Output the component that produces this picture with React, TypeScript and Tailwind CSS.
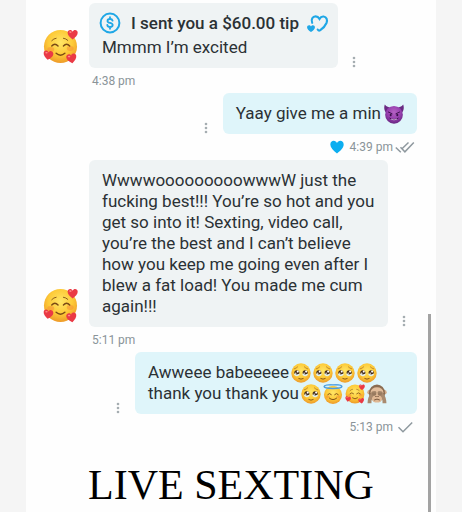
import type { ReactNode } from 'react'

interface IIcon {
  className?: string
}

interface IMessage {
  children: ReactNode
  time: string
}

interface IOutgoingMessage extends IMessage {
  isLiked?: boolean
  isRead?: boolean
}

const HEART =
  'M0 5C-3 2.8-5.2.6-5.2-1.9-5.2-3.8-3.9-4.8-2.6-4.8-1.4-4.8-.5-4.1 0-3 .5-4.1 1.4-4.8 2.6-4.8 3.9-4.8 5.2-3.8 5.2-1.9 5.2.6 3 2.8 0 5Z'

const EmojiDefs = () => (
  <svg width="0" height="0" className="absolute" aria-hidden="true">
    <defs>
      <radialGradient id="face" cx="50%" cy="38%" r="62%">
        <stop offset="0" stopColor="#ffe566" />
        <stop offset="0.6" stopColor="#fdca38" />
        <stop offset="1" stopColor="#ee9a28" />
      </radialGradient>
      <radialGradient id="devil" cx="50%" cy="35%" r="65%">
        <stop offset="0" stopColor="#b562c4" />
        <stop offset="0.6" stopColor="#943ead" />
        <stop offset="1" stopColor="#672680" />
      </radialGradient>
    </defs>
  </svg>
)

const LoveFace = ({ className }: IIcon) => (
  <svg viewBox="0 0 36 36" className={className} role="img" aria-label="Smiling face with hearts">
    <circle cx="18" cy="18" r="17" fill="url(#face)" />
    <ellipse cx="8" cy="21" rx="3.5" ry="2.5" fill="#f58a36" opacity="0.5" />
    <ellipse cx="28" cy="20" rx="3.5" ry="2.5" fill="#f58a36" opacity="0.5" />
    <g fill="none" stroke="#7a4a15" strokeLinecap="round">
      <path d="M9 17.5q3.2-3.6 6.5 0M21 17.5q3.2-3.6 6.5 0" strokeWidth="1.4" />
      <path d="M9 12q2-2.3 4.5-2.5M21 9.5q2.500.2 4.500 2.200" strokeWidth="0.9" />
      <path d="M13.500 25q4.500 3.800 9 0" strokeWidth="1.500" />
    </g>
    <g fill="#ea3a45">
      <path d={HEART} transform="translate(30.5 5.8)" />
      <path d={HEART} transform="translate(5.4 27) rotate(8) scale(0.96)" />
      <path d={HEART} transform="translate(29.4 30.4) rotate(-10)" />
    </g>
    <g fill="#ff8b87">
      <ellipse cx="28.2" cy="3.2" rx="1.3" ry="0.8" />
      <ellipse cx="3.6" cy="24.4" rx="1.3" ry="0.8" />
      <ellipse cx="26.8" cy="28.4" rx="1.3" ry="0.8" />
    </g>
  </svg>
)

const TearyFace = ({ className }: IIcon) => (
  <svg viewBox="0 0 36 36" className={className} role="img" aria-label="Face holding back tears">
    <circle cx="18" cy="18" r="17.5" fill="url(#face)" />
    <path d="M6 10.5q3.500-.8 6-3.500M30 10.500q-3.500-.8-6-3.500" fill="none" stroke="#a5691d" strokeWidth="1.2" strokeLinecap="round" />
    <circle cx="10.5" cy="17.5" r="4.6" fill="#40291a" />
    <circle cx="25.5" cy="17.5" r="4.6" fill="#40291a" />
    <path d="M5.200 19q5.300 3 10.600 0-.6 5-5.300 5t-5.300-5ZM20.200 19q5.300 3 10.600 0-.6 5-5.300 5t-5.300-5Z" fill="#e3f1ee" />
    <g fill="#fff">
      <circle cx="12.2" cy="15.500" r="1.900" />
      <circle cx="27.2" cy="15.500" r="1.900" />
      <circle cx="8.600" cy="18.500" r="1.200" />
      <circle cx="23.600" cy="18.500" r="1.200" />
    </g>
    <path d="M14 28q4 2.500 8 0" fill="none" stroke="#7a4a15" strokeWidth="1.600" strokeLinecap="round" />
  </svg>
)

const HaloFace = ({ className }: IIcon) => (
  <svg viewBox="0 0 36 36" className={className} role="img" aria-label="Smiling face with halo">
    <circle cx="18" cy="19.5" r="16.3" fill="url(#face)" />
    <ellipse cx="18" cy="4.6" rx="16" ry="3.4" fill="none" stroke="#4c9ddf" strokeWidth="2.6" />
    <path d="M5 3.4q13-4 26 0" fill="none" stroke="#9bd0f5" strokeWidth="1" />
    <ellipse cx="8.5" cy="23" rx="3.5" ry="2.4" fill="#f58a36" opacity="0.5" />
    <ellipse cx="27.5" cy="23" rx="3.5" ry="2.4" fill="#f58a36" opacity="0.5" />
    <g fill="none" stroke="#7a4a15" strokeWidth="1.7" strokeLinecap="round">
      <path d="M8.5 19q3.2-4 6.5 0M21 19q3.2-4 6.5 0" />
      <path d="M11.5 25.5q6.5 5.5 13 0" />
    </g>
  </svg>
)

const MonkeyFace = ({ className }: IIcon) => (
  <svg viewBox="0 0 36 36" className={className} role="img" aria-label="See-no-evil monkey">
    <circle cx="4.500" cy="15" r="4" fill="#d3ab88" />
    <circle cx="31.500" cy="15" r="4" fill="#d3ab88" />
    <ellipse cx="18" cy="16.500" rx="14.500" ry="15.500" fill="#8b6c51" />
    <ellipse cx="18" cy="15" rx="11.500" ry="9" fill="#e2bd9b" />
    <ellipse cx="18" cy="26" rx="9.500" ry="7.500" fill="#dfb894" />
    <path d="M15.600 22.500h1M19.400 22.500h1" stroke="#5b3d28" strokeWidth="1.400" strokeLinecap="round" />
    <path d="M13.500 28.500q4.500-3 9 0" fill="none" stroke="#6b4a32" strokeWidth="1.600" strokeLinecap="round" />
    <path d="M1 34.500C1 28 3 21 7 17c1-4 4-5 9-4q2 1.500.6 3.500 1 2-.6 3.300-1.500 2-5 2.200C8.500 25 8 29 8 34.500Z" fill="#a98a6e" />
    <path d="M35 34.500C35 28 33 21 29 17c-1-4-4-5-9-4q-2 1.500-.6 3.500-1 2 .6 3.300 1.500 2 5 2.200C27.500 25 28 29 28 34.500Z" fill="#a98a6e" />
    <path d="M9 16.500h7.500M9.500 19.500l6.500-.3M27 16.500h-7.500M26.500 19.500l-6.500-.3" stroke="#755840" strokeWidth="0.800" />
  </svg>
)

const DevilFace = ({ className }: IIcon) => (
  <svg viewBox="0 0 36 36" className={className} role="img" aria-label="Smiling face with horns">
    <path d="M5 17C0 12-.5 6 1.5 1 4 5 9 6 13 7ZM31 17c5-5 5.500-11 3.500-16C32 5 27 6 23 7Z" fill="#692982" />
    <circle cx="18" cy="19.5" r="16" fill="url(#devil)" />
    <g fill="none" stroke="#3b114c" strokeLinecap="round">
      <path d="M8 14.5l6.500 3M28 14.5l-6.500 3" strokeWidth="1.700" />
      <path d="M10.500 25.500q7.500 6 15 0" strokeWidth="1.700" />
    </g>
    <ellipse cx="12" cy="19.8" rx="1.8" ry="2.3" fill="#3b114c" />
    <ellipse cx="24" cy="19.8" rx="1.8" ry="2.3" fill="#3b114c" />
    <path d="M12.500 27.200q5.500 2.800 11 0" fill="none" stroke="#eadbf0" strokeWidth="1.200" />
  </svg>
)

const TipIcon = ({ className }: IIcon) => (
  <svg viewBox="0 0 22 22" fill="none" stroke="#1fa7e6" className={className} aria-hidden="true">
    <circle cx="11" cy="11" r="9.4" strokeWidth="2" />
    <path
      d="M13.600 8.700C13.300 7.500 12.400 7 11 7 9.500 7 8.500 7.700 8.500 8.900c0 2.800 5.200 1.300 5.200 4.200C13.700 14.300 12.600 15 11 15c-1.500 0-2.500-.7-2.700-2M11 5.200V7M11 15v1.800"
      strokeWidth="1.8"
      strokeLinecap="round"
    />
  </svg>
)

const HeartsIcon = ({ className }: IIcon) => (
  <svg viewBox="0 0 24 20" className={className} aria-hidden="true">
    <path
      d="M7.200 9.800C5.800 6.500 7.600 3.400 10.600 3.400c1.800 0 3 .9 3.900 2.500.9-1.700 2.400-2.600 4.100-2.400 3 .4 4.100 3.400 2.900 6.500-1.200 2.900-3.800 5.600-6.500 7.400-1 .5-1.700.1-2.300-.9"
      fill="none"
      stroke="#1fa7e6"
      strokeWidth="2.1"
      strokeLinecap="round"
    />
    <path d={HEART} fill="#1fa7e6" transform="translate(6 15.600) scale(0.76 0.7)" />
  </svg>
)

const CheckIcon = ({ isRead }: { isRead?: boolean }) => (
  <svg
    viewBox="0 0 20 14"
    fill="none"
    stroke="#8f999f"
    strokeWidth="1.5"
    className="h-3.5 w-5"
    role="img"
    aria-label={isRead ? 'Read' : 'Sent'}
  >
    {isRead ? (
      <path d="M.8 7.500l5 4.800M7.500 8.300L13.500 2.500M5.500 7.200l4.400 4.600L18.800 2.500" />
    ) : (
      <path d="M3.500 7.300l4.500 4.400L17.200 2.500" />
    )}
  </svg>
)

const MoreButton = () => (
  <button type="button" aria-label="Message options" className="flex w-3 shrink-0 justify-center self-end">
    <svg viewBox="0 0 4 12" fill="#a5adb1" className="h-3 w-1">
      <circle cx="2" cy="2" r="1.3" />
      <circle cx="2" cy="6" r="1.3" />
      <circle cx="2" cy="10" r="1.3" />
    </svg>
  </button>
)

const IncomingMessage = ({ children, time }: IMessage) => (
  <article>
    <div className="flex items-end">
      <div className="w-[63px] shrink-0 pb-1 pl-[17px]">
        <LoveFace className="size-[35px]" />
      </div>
      <div className="mr-2.5 max-w-[299px] rounded-md bg-[#eff3f4] px-[13px] py-2.5">{children}</div>
      <MoreButton />
    </div>
    <div className="flex h-[25px] items-center pl-[66px] text-xs text-[#8a9499]">
      <time>{time}</time>
    </div>
  </article>
)

const OutgoingMessage = ({ children, time, isLiked, isRead }: IOutgoingMessage) => (
  <article className="pr-[19px]">
    <div className="flex justify-end">
      <MoreButton />
      <div className="ml-[11px] max-w-[282px] rounded-md bg-[#dff5fa] px-[13px] py-2.5">{children}</div>
    </div>
    <div className="flex h-[26px] items-center justify-end pr-[2px] text-xs text-[#8a9499]">
      {isLiked ? (
        <svg viewBox="-6 -6 12 12" className="mr-1.5 size-3.5" role="img" aria-label="Liked">
          <path d={HEART} fill="#0caef0" transform="scale(1.1 1.1)" />
        </svg>
      ) : null}
      <time className="mr-0.5">{time}</time>
      <CheckIcon isRead={isRead} />
    </div>
  </article>
)

export default function App() {
  return (
    <div className="h-screen overflow-hidden bg-[#f5f5f5] px-[26px] font-['Roboto',sans-serif] text-[17px] leading-[21px] text-[#2b3135]">
      <EmojiDefs />
      <main className="relative min-h-full bg-[#fefefe] pt-[3px]">
        <IncomingMessage time="4:38 pm">
          <p className="-mr-1 mb-1 flex h-5 items-center font-medium">
            <TipIcon className="-ml-[3px] mr-2.5 size-[22px]" />
            I sent you a $60.00 tip
            <HeartsIcon className="ml-1.5 h-5 w-6" />
          </p>
          <p>Mmmm I’m excited</p>
        </IncomingMessage>

        <OutgoingMessage time="4:39 pm" isLiked isRead>
          <p className="flex items-center gap-[3px]">
            Yaay give me a min
            <DevilFace className="size-5" />
          </p>
        </OutgoingMessage>

        <IncomingMessage time="5:11 pm">
          <p>
            WwwwooooooooowwwW just the fucking best!!! You’re so hot and you get so into it! Sexting, video call, you’re
            the best and I can’t believe how you keep me going even after I blew a fat load! You made me cum again!!!
          </p>
        </IncomingMessage>

        <OutgoingMessage time="5:13 pm">
          <div className="w-64">
            <p className="flex items-center gap-0.5">
              <span>Awweee babeeeee</span>
              <TearyFace className="size-5" />
              <TearyFace className="size-5" />
              <TearyFace className="size-5" />
              <TearyFace className="size-5" />
            </p>
            <p className="flex items-center gap-0.5">
              <span>thank you thank you</span>
              <TearyFace className="size-5" />
              <HaloFace className="size-5" />
              <LoveFace className="size-5" />
              <MonkeyFace className="size-5" />
            </p>
          </div>
        </OutgoingMessage>

        <h1 className="pt-6 text-center font-['Liberation_Serif',serif] text-[42px] leading-[42px] text-black">
          LIVE SEXTING
        </h1>

        <div className="absolute bottom-0 right-[5px] top-[314px] w-[3px] bg-[#a3a3a3]" />
      </main>
    </div>
  )
}
